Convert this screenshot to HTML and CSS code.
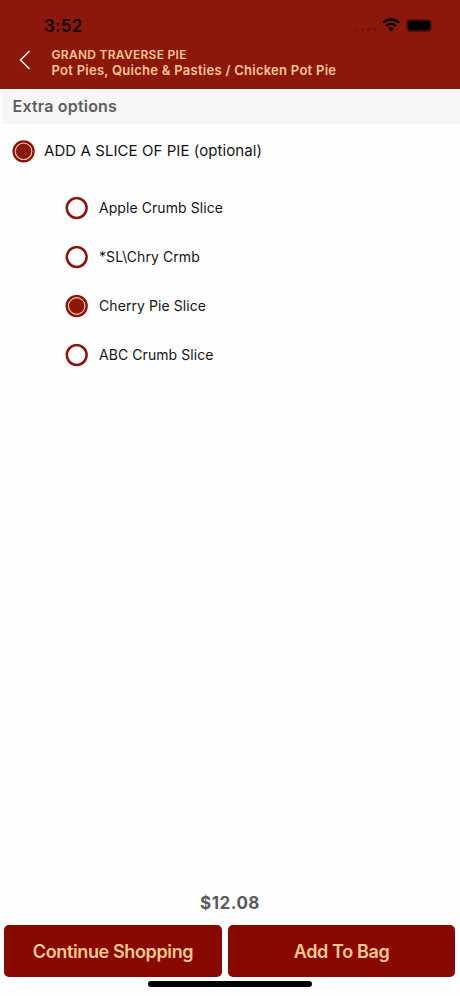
FILE: index.html
```html
<!DOCTYPE html>
<html lang="en">
<head>
    <meta charset="UTF-8">
    <meta name="viewport" content="width=device-width, initial-scale=1.0">
    <title>Grand Traverse Pie</title>
    <link rel="stylesheet" href="styles.css">
</head>
<body>
    <div class="screen">
        <header class="header">
            <div class="status-bar">
                <span class="time">3:52</span>
                <div class="status-icons">
                    <div class="signal"><i></i><i></i><i></i><i></i></div>
                    <svg class="wifi" width="18" height="14" viewBox="0 0 18 14">
                        <path d="M1 4.6C5.6.5 12.4.5 17 4.6" fill="none" stroke="#000" stroke-width="2.4"/>
                        <path d="M4 8C6.9 5.3 11.1 5.3 14 8" fill="none" stroke="#000" stroke-width="2.3"/>
                        <path d="M6.2 10.3Q9 8.2 11.8 10.3L9 13.3Z" fill="#000"/>
                    </svg>
                    <svg class="battery" width="30" height="13" viewBox="0 0 30 13">
                        <rect x=".5" y=".5" width="25" height="12" rx="3" fill="none" stroke="#630c06"/>
                        <rect x="1.6" y="1.6" width="22.8" height="9.8" rx="1.7" fill="#000"/>
                        <path d="M27.5 4.5Q29 6.5 27.5 8.5Z" fill="#630c06"/>
                    </svg>
                </div>
            </div>
            <div class="nav">
                <svg class="back" width="12" height="20" viewBox="0 0 12 20">
                    <path d="M10.5 1L1.5 10L10.5 19" fill="none" stroke="#fff" stroke-width="1.4"/>
                </svg>
                <div class="titles">
                    <div class="store">GRAND TRAVERSE PIE</div>
                    <div class="crumbs">Pot Pies, Quiche &amp; Pasties / Chicken Pot Pie</div>
                </div>
            </div>
        </header>

        <h2 class="section-title">Extra options</h2>

        <main class="options">
            <label class="option">
                <svg class="radio" viewBox="0 0 23 23"><circle class="ring" cx="11.6" cy="11.3" r="9.9"/><circle class="dot" cx="11.6" cy="11.3" r="8.2"/></svg>
                <span class="group-name">ADD A SLICE OF PIE (optional)</span>
            </label>
            <div class="choices">
                <label class="option">
                    <svg class="radio" viewBox="0 0 23 23"><circle class="ring" cx="11.7" cy="11" r="9.9"/></svg>
                    <span class="name">Apple Crumb Slice</span>
                </label>
                <label class="option">
                    <svg class="radio" viewBox="0 0 23 23"><circle class="ring" cx="11.7" cy="11" r="9.9"/></svg>
                    <span class="name">*SL\Chry Crmb</span>
                </label>
                <label class="option">
                    <svg class="radio" viewBox="0 0 23 23"><circle class="ring" cx="11.7" cy="11" r="9.9"/><circle class="dot" cx="11.7" cy="11" r="8.2"/></svg>
                    <span class="name">Cherry Pie Slice</span>
                </label>
                <label class="option">
                    <svg class="radio" viewBox="0 0 23 23"><circle class="ring" cx="11.7" cy="11" r="9.9"/></svg>
                    <span class="name">ABC Crumb Slice</span>
                </label>
            </div>
        </main>

        <footer class="footer">
            <div class="price">$12.08</div>
            <div class="buttons">
                <button class="continue">Continue Shopping</button>
                <button class="add">Add To Bag</button>
            </div>
            <div class="home-indicator"></div>
        </footer>
    </div>
</body>
</html>
```

FILE: styles.css
```css
* {
    box-sizing: border-box;
}

body {
    margin: 0;
    background-color: #fefefe;
    font-family: Inter, sans-serif;
    color: #141414;
}

.screen {
    display: flex;
    flex-direction: column;
    height: 996px;
}

.header {
    height: 89px;
    background-color: #8c170b;
}

.status-bar {
    display: flex;
    justify-content: space-between;
    height: 46px;
    padding: 15px 24px 0 44px;
}

.time {
    color: #100000;
    font-size: 17px;
    font-weight: 600;
    line-height: 22px;
    letter-spacing: 0.3px;
}

.status-icons {
    display: flex;
    align-items: flex-start;
    padding-top: 3px;
}

.signal {
    display: flex;
    gap: 3px;
    margin: 10px 6px 0 0;
}

.signal i {
    width: 3px;
    height: 3px;
    border-radius: 50%;
    background-color: #73110a;
}

.wifi {
    margin-right: 6px;
}

.battery {
    margin-top: 1px;
}

.nav {
    display: flex;
    padding-left: 19px;
}

.back {
    margin-top: 4px;
}

.titles {
    margin-left: 20.5px;
    color: #fbc890;
    font-weight: 600;
    white-space: nowrap;
}

.store {
    font-size: 12px;
    line-height: 17px;
    letter-spacing: 0.28px;
}

.crumbs {
    font-size: 13px;
    line-height: 15px;
    letter-spacing: 0.27px;
}

.section-title {
    height: 34px;
    margin: 1px 0 0 2px;
    padding-left: 10.5px;
    background-color: #f6f6f6;
    color: #5d5d5d;
    font-size: 16px;
    font-weight: 600;
    line-height: 32px;
    letter-spacing: 0.2px;
}

.options {
    padding: 16px 12px 0;
}

.option {
    display: flex;
    align-items: center;
    height: 23px;
}

.radio {
    width: 23px;
    height: 23px;
}

.ring {
    fill: none;
    stroke: #8a150b;
    stroke-width: 2.5;
}

.dot {
    fill: #8c170b;
    stroke: #f5c9ac;
    stroke-width: 1;
}

.group-name {
    margin: 0 0 2px 9px;
    font-size: 15px;
    line-height: 20px;
    letter-spacing: 0.07px;
}

.choices {
    display: flex;
    flex-direction: column;
    gap: 26px;
    padding: 34px 0 0 53px;
}

.name {
    margin: 0 0 1px 11px;
    font-size: 14px;
    line-height: 20px;
    letter-spacing: 0.07px;
}

.footer {
    margin-top: auto;
}

.price {
    color: #5a5a5c;
    font-size: 17px;
    font-weight: 700;
    line-height: 24px;
    letter-spacing: 0.5px;
    text-align: center;
}

.buttons {
    display: flex;
    gap: 6px;
    padding: 10px 5px 0 4px;
}

.buttons button {
    height: 52px;
    padding: 0;
    border: none;
    border-radius: 5px;
    background-color: #870900;
    color: #fbc890;
    font-family: inherit;
    font-size: 18px;
    font-weight: 600;
    letter-spacing: -0.37px;
}

.buttons .continue {
    width: 218px;
}

.buttons .add {
    flex: 1;
}

.home-indicator {
    width: 164px;
    height: 6px;
    margin: 4px auto 9px 148px;
    border-radius: 3px;
    background-color: #000;
}
```
